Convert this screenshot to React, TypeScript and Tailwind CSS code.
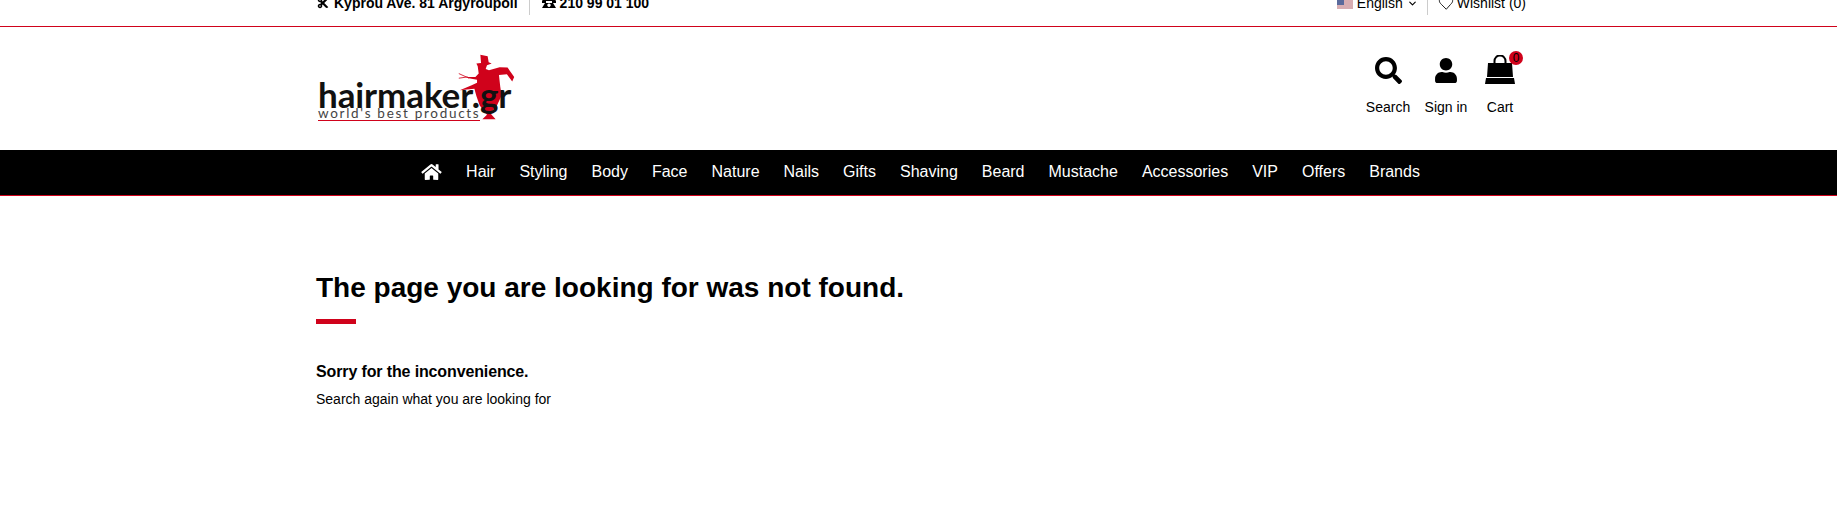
import type { ReactNode } from "react";
import { FaCut, FaHome, FaSearch, FaUser } from "react-icons/fa";
import { LuChevronDown, LuHeart } from "react-icons/lu";

const nav = ["Hair","Styling","Body","Face","Nature","Nails","Gifts","Shaving","Beard","Mustache","Accessories","VIP","Offers","Brands"];

function Phone() {
  return (
    <svg viewBox="0 0 14 10" className="w-[14px] h-[10px] shrink-0" fill="#000">
      <path d="M0 3.500C0 1 4 0 7 0s7 1 7 3.500V5H10V3H4v2H0z" />
      <path d="M3 5h8l3 5H0zM7 5.500a1.700 1.700 0 1 0 .01 0z" fillRule="evenodd" />
    </svg>
  );
}

function Flag() {
  return (
    <svg viewBox="0 0 16 10" className="w-[16px] h-[10px] shrink-0 mt-[1px]">
      <rect width="16" height="10" fill="#e8e0e4" />
      <path d="M0 1h16M0 3h16M0 5h16M0 7h16M0 9h16" stroke="#c77b80" strokeWidth="1" />
      <rect width="7" height="6" fill="#5a6a9c" />
    </svg>
  );
}

function Figure() {
  return (
    <svg viewBox="470 160 180 205" className="absolute left-[141px] top-0 w-[60px] h-[68px]">
      <path
        fill="#d0021b"
        d="M540 165L562 170L565 188L574 192L560 197L556 208L566 212L598 203L622 204L642 232L636 246L620 224L596 226L600 262L604 288L590 318L570 342L586 360L546 360L560 346L538 318L528 290L522 268L478 272L512 258L530 250L530 241L505 236L500 232L525 232L535 222L532 200L528 192L542 190Z"
      />
      <path fill="none" stroke="#d0021b" strokeWidth="2.500" d="M475 222L506 236M475 236L502 232" />
    </svg>
  );
}

function Logo() {
  return (
    <div className="relative w-[200px] h-[72px] shrink-0">
      <Figure />
      <div className="absolute left-[2px] top-[21px] text-[35px] leading-[40px] font-['Lato',sans-serif] font-bold text-[#111] tracking-[-0.1px] whitespace-nowrap">hairmaker.gr</div>
      <div className="absolute left-[2px] top-[54px] text-[13.500px] leading-[13px] font-['Lato',sans-serif] text-[#444] tracking-[1.700px] whitespace-nowrap">world's best products</div>
      <div className="absolute left-[2px] top-[67px] w-[162px] h-[1px] bg-[#d0021b]" />
    </div>
  );
}

function HeaderIcon({ label, children, w }: { label: string; children: ReactNode; w: string }) {
  return (
    <div className={`flex flex-col items-center ${w}`}>
      <div className="h-[32px] flex items-center justify-center relative">{children}</div>
      <div className="text-[14px] leading-[16px] mt-[13px]">{label}</div>
    </div>
  );
}

export default function App() {
  return (
    <div className="w-[1837px] h-[512px] bg-white text-black font-['Liberation_Sans',Arial,sans-serif] overflow-hidden">
      <div className="h-[27px] border-b border-[#d0021b]">
        <div className="w-[1211px] ml-[316px] h-[15px] flex justify-between text-[14px] leading-[14px]">
          <div className="flex font-bold">
            <div className="flex items-center gap-[5px] pl-[1px] pr-[11px] h-[14px] -mt-[4px]">
              <FaCut className="w-[12px] h-[12px]" />
              <span>Kyprou Ave. 81 Argyroupoli</span>
            </div>
            <div className="w-px h-[15px] bg-[#ccc]" />
            <div className="flex items-center gap-[4px] pl-[12px] h-[14px] -mt-[4px]">
              <Phone />
              <span>210 99 01 100</span>
            </div>
          </div>
          <div className="flex pr-[1px]">
            <div className="flex items-center gap-[4px] pr-[9px] h-[14px] -mt-[4px]">
              <Flag />
              <span>English</span>
              <LuChevronDown className="w-[11px] h-[11px] mt-[1px]" strokeWidth={2.500} />
            </div>
            <div className="w-px h-[15px] bg-[#ccc]" />
            <div className="flex items-center gap-[3px] pl-[10px] h-[14px] -mt-[4px]">
              <LuHeart className="w-[16px] h-[16px]" strokeWidth={1.300} />
              <span>Wishlist (0)</span>
            </div>
          </div>
        </div>
      </div>

      <div className="h-[123px] w-[1211px] ml-[316px] flex justify-between">
        <div className="pt-[26px]"><Logo /></div>
        <div className="flex pt-[27px] pr-[7px] gap-[12px]">
          <HeaderIcon label="Search" w="w-[48px]"><FaSearch className="w-[27px] h-[27px]" /></HeaderIcon>
          <HeaderIcon label="Sign in" w="w-[44px]"><FaUser className="w-[22px] h-[25px]" /></HeaderIcon>
          <HeaderIcon label="Cart" w="w-[40px]">
            <svg viewBox="0 0 30 30" className="w-[30px] h-[30px]" fill="#000">
              <path d="M9.500 9V6a5.500 5.500 0 0 1 11 0v3" fill="none" stroke="#000" strokeWidth="2" />
              <path d="M3 8h24l1 14H2zM1 23h28l1 6H0z" />
            </svg>
            <div className="absolute -top-[3px] left-[24px] w-[14px] h-[14px] rounded-full bg-[#d0021b] text-[12px] leading-[14px] text-center">0</div>
          </HeaderIcon>
        </div>
      </div>

      <div className="h-[46px] bg-black border-b border-[#d0021b] flex justify-center items-center text-white text-[16px] pl-[4px] pb-[2px]">
        <div className="flex items-center gap-[24px]">
          <FaHome className="w-[21px] h-[18px]" />
          {nav.map((n) => <span key={n}>{n}</span>)}
        </div>
      </div>

      <div className="ml-[316px] pt-[76px]">
        <h1 className="text-[28px] leading-[32px] font-bold">The page you are looking for was not found.</h1>
        <div className="w-[40px] h-[5px] bg-[#d0021b] mt-[15px]" />
        <div className="mt-[38px] text-[16px] leading-[20px] font-bold tracking-[-0.13px]">Sorry for the inconvenience.</div>
        <div className="mt-[8px] text-[14px] leading-[18px]">Search again what you are looking for</div>
      </div>
    </div>
  );
}
